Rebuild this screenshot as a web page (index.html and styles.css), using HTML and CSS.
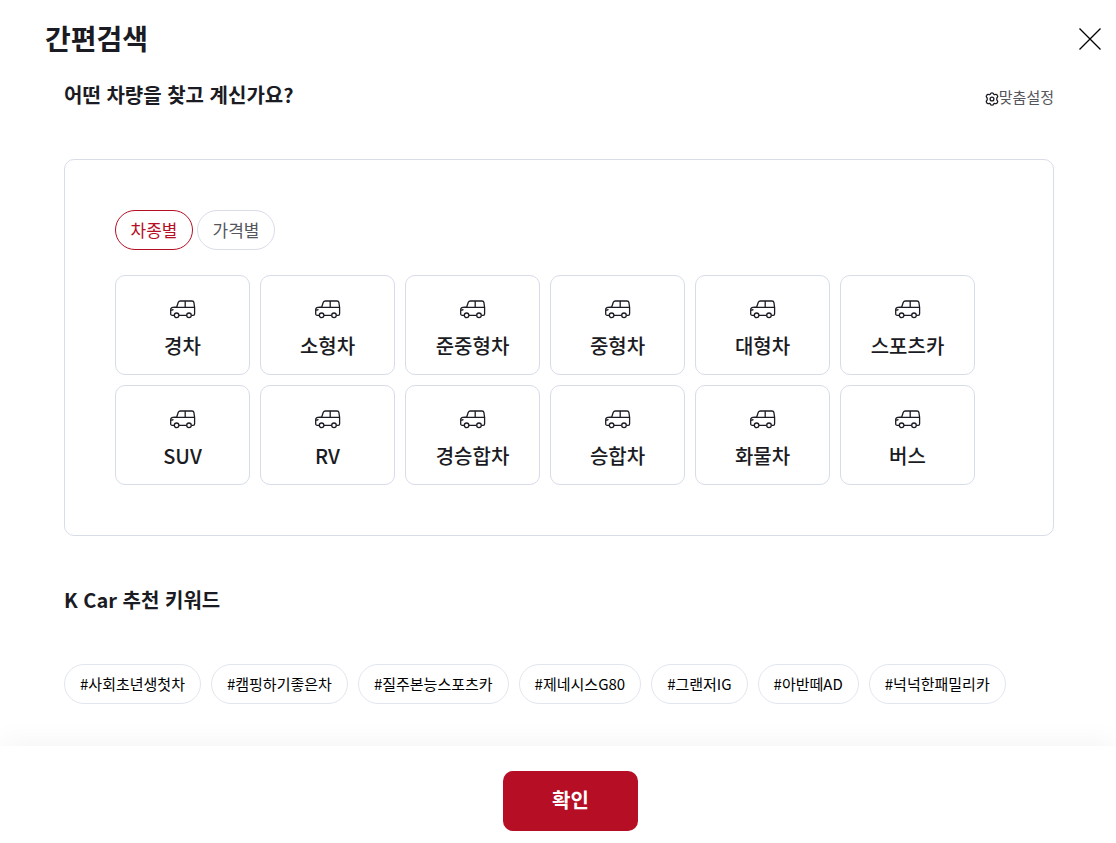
FILE: index.html
```
<!DOCTYPE html>
<html lang="ko">
<head>
	<meta charset="utf-8"/>
	<meta name="viewport" content="width=device-width, initial-scale=1"/>
	<title>간편검색</title>
	<link rel="stylesheet" href="styles.css">
</head>
<body>

<svg class="symbols" aria-hidden="true">
	<symbol id="car" viewBox="0 0 26 20">
		<path d="M4 16.3H2.3Q.7 16.3 .7 14.7V10.8Q.7 8.5 2.9 8.3L6.7 8L8.3 3.3Q8.9 2 10.3 2H22Q23.6 2 23.9 3.5L24.6 8.3V14.7Q24.6 16.3 23.2 16.3H21.6M9 16.3H16.6M6.5 8.3H24.6M15.2 2V8.3M.7 11.2H2Q3 11.2 3 10"/>
		<circle cx="6.6" cy="16.3" r="2.3"/>
		<circle cx="19" cy="16.3" r="2.3"/>
	</symbol>
</svg>

<header class="header">
	<h1>간편검색</h1>
	<button type="button" class="close" aria-label="닫기">
		<svg viewBox="0 0 24 24"><path d="M1.5 1.5L22.5 22.5M22.5 1.5L1.5 22.5"/></svg>
	</button>
</header>

<main class="content">
	<div class="title_row">
		<h2>어떤 차량을 찾고 계신가요?</h2>
		<button type="button" class="setting">
			<svg viewBox="0 0 14 14"><path d="M7 .8Q8.4 .8 8.7 2.2L9.5 2.7Q11.6 2 12.3 3.3Q13.3 4.8 11.8 6V8Q13.3 9.2 12.3 10.7Q11.6 12 9.5 11.3L8.7 11.8Q8.4 13.2 7 13.2Q5.6 13.2 5.3 11.8L4.5 11.3Q2.4 12 1.7 10.7Q.7 9.2 2.2 8V6Q.7 4.8 1.7 3.3Q2.4 2 4.5 2.7L5.3 2.2Q5.6 .8 7 .8Z"/><circle cx="7" cy="7" r="1.9"/></svg>
			<span>맞춤설정</span>
		</button>
	</div>

	<section class="panel">
		<div class="tabs">
			<button type="button" class="tab on">차종별</button>
			<button type="button" class="tab">가격별</button>
		</div>
		<div class="types">
			<button type="button" class="type"><svg><use href="#car"/></svg>경차</button>
			<button type="button" class="type"><svg><use href="#car"/></svg>소형차</button>
			<button type="button" class="type"><svg><use href="#car"/></svg>준중형차</button>
			<button type="button" class="type"><svg><use href="#car"/></svg>중형차</button>
			<button type="button" class="type"><svg><use href="#car"/></svg>대형차</button>
			<button type="button" class="type"><svg><use href="#car"/></svg>스포츠카</button>
			<button type="button" class="type"><svg><use href="#car"/></svg>SUV</button>
			<button type="button" class="type"><svg><use href="#car"/></svg>RV</button>
			<button type="button" class="type"><svg><use href="#car"/></svg>경승합차</button>
			<button type="button" class="type"><svg><use href="#car"/></svg>승합차</button>
			<button type="button" class="type"><svg><use href="#car"/></svg>화물차</button>
			<button type="button" class="type"><svg><use href="#car"/></svg>버스</button>
		</div>
	</section>

	<section class="recommend">
		<h2>K Car 추천 키워드</h2>
		<div class="keywords">
			<button type="button" class="keyword">#사회초년생첫차</button>
			<button type="button" class="keyword">#캠핑하기좋은차</button>
			<button type="button" class="keyword">#질주본능스포츠카</button>
			<button type="button" class="keyword">#제네시스G80</button>
			<button type="button" class="keyword">#그랜저IG</button>
			<button type="button" class="keyword">#아반떼AD</button>
			<button type="button" class="keyword">#넉넉한패밀리카</button>
		</div>
	</section>
</main>

<footer class="footer">
	<button type="button" class="confirm">확인</button>
</footer>

</body>
</html>
```

FILE: styles.css
```
* {
	box-sizing: border-box;
}

body {
	display: flex;
	flex-direction: column;
	min-height: 100vh;
	margin: 0;
	background: #fff;
	color: #1b1b23;
	font-family: "Noto Sans CJK KR", sans-serif;
}

h1, h2 {
	margin: 0;
	font-weight: 700;
}

h1 {
	font-size: 28px;
	line-height: 36px;
}

h2 {
	font-size: 20px;
	line-height: 28px;
}

button {
	padding: 0;
	border: 0;
	background: none;
	color: inherit;
	font: inherit;
	cursor: pointer;
}

svg {
	display: block;
	fill: none;
	stroke: #1b1b23;
	stroke-linejoin: round;
}

.symbols {
	position: absolute;
	width: 0;
	height: 0;
}

.header {
	display: flex;
	justify-content: space-between;
	align-items: flex-start;
	padding: 20px 14px 0 45px;
}

.close {
	margin-top: 7px;
}

.close svg {
	width: 24px;
	height: 24px;
	stroke: #000;
	stroke-width: 1.3;
}

.content {
	flex: 1;
	padding: 25px 62px 40px 64px;
}

.title_row {
	display: flex;
	justify-content: space-between;
	align-items: flex-end;
}

.setting {
	display: flex;
	align-items: center;
	color: #55565c;
	font-size: 15px;
	line-height: 24px;
}

.setting svg {
	width: 14px;
	height: 14px;
	margin-top: 3px;
	stroke-width: 1.3;
}

.panel {
	margin-top: 50px;
	padding: 50px;
	border: 1px solid #d9dde8;
	border-radius: 10px;
}

.tabs {
	display: flex;
	gap: 4px;
}

.tab {
	width: 78px;
	height: 40px;
	padding-bottom: 2px;
	border: 1px solid #d9dde8;
	border-radius: 20px;
	color: #55565c;
	font-size: 17px;
}

.tab.on {
	border-color: #b50e25;
	color: #b50e25;
}

.types {
	display: flex;
	flex-wrap: wrap;
	gap: 10px;
	margin-top: 25px;
}

.type {
	display: flex;
	flex-direction: column;
	align-items: center;
	justify-content: center;
	gap: 12px;
	width: 135px;
	height: 100px;
	padding-top: 10px;
	border: 1px solid #d6dde9;
	border-radius: 10px;
	font-size: 20px;
	font-weight: 500;
	line-height: 30px;
}

.type svg {
	width: 26px;
	height: 20px;
	stroke-width: 1.3;
}

.recommend {
	margin-top: 50px;
}

.keywords {
	display: flex;
	flex-wrap: wrap;
	gap: 10px;
	margin-top: 50px;
}

.keyword {
	height: 40px;
	padding: 0 15px 2px;
	border: 1px solid #e1e6ef;
	border-radius: 20px;
	color: #000;
	font-size: 15px;
}

.footer {
	display: flex;
	justify-content: center;
	padding: 25px 0 12px 25px;
	background: #fff;
	box-shadow: 0 0 30px rgba(0, 0, 0, .06);
}

.confirm {
	width: 135px;
	height: 60px;
	padding-bottom: 4px;
	border-radius: 10px;
	background: #b50e25;
	color: #fff;
	font-size: 20px;
	font-weight: 700;
}
```
